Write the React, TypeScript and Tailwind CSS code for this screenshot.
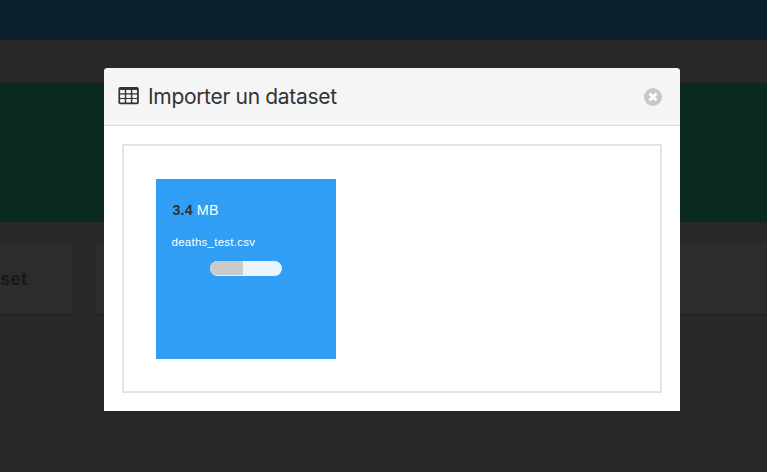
function TableIcon() {
  return (
    <svg className="mb-[2px] h-[18px] w-[21px] shrink-0" viewBox="0 0 21 18" aria-hidden="true">
      <rect x="0.4" y="0" width="20.4" height="17.2" rx="2" fill="#333333" />
      {[3, 7.6, 12.1].map((y) =>
        [2.1, 8.2, 14.3].map((x) => (
          <rect key={`${x}-${y}`} x={x} y={y} width="4.7" height="3.3" rx="0.4" fill="#f5f5f5" />
        )),
      )}
    </svg>
  );
}

function CloseIcon() {
  return (
    <svg className="block size-[18px]" viewBox="0 0 18 18" aria-hidden="true">
      <circle cx="9" cy="9" r="9" fill="#c8c8c8" />
      <path d="M5.5 5.5l7 7M12.5 5.5l-7 7" stroke="#ffffff" strokeWidth="2.7" />
    </svg>
  );
}

function FilePreview() {
  return (
    <div className="flex size-[180px] flex-col bg-[#2f9ef4] pt-[22px] text-white">
      <div className="pl-[16.5px] text-[14.4px] leading-[18px] tracking-[0.08px]">
        <strong className="font-bold text-[#333333]">3.4</strong> MB
      </div>
      <div className="mt-[15px] pl-[15.5px] text-[11.5px] leading-[16px] tracking-[0.26px]">deaths_test.csv</div>
      <div className="mt-[11px] ml-[54px] h-[15px] w-[72px] overflow-hidden rounded-[8px] bg-[#e9f4fe]">
        <div className="h-[14px] w-[33px] bg-[#cbcbcb]" />
      </div>
    </div>
  );
}

export default function App() {
  return (
    <div className="relative h-[472px] w-[767px] overflow-hidden bg-[#282828] font-['Liberation_Sans',Arial,sans-serif]">
      <div className="flex h-full flex-col">
        <div className="h-[40px] shrink-0 bg-[#0b1e2c]" />
        <div className="mt-[43px] h-[139px] shrink-0 bg-[#0a2921]" />
        <div className="mt-[22px] flex h-[70px] gap-[23px]">
          <div className="flex w-[72px] items-center rounded-r-[4px] bg-[#2c2c2c] shadow-[0_1px_1px_#222222]">
            <span className="text-[18px] font-bold tracking-[0.5px] text-[#181818]">set</span>
          </div>
          <div className="flex-1 rounded-l-[4px] bg-[#2c2c2c] shadow-[0_1px_1px_#222222]" />
        </div>
      </div>

      <div
        role="dialog"
        className="absolute top-[68px] left-[104px] flex h-[343px] w-[576px] flex-col overflow-hidden rounded-t-[4px] bg-white"
      >
        <header className="flex h-[58px] shrink-0 items-center border-b border-[#d9d9d9] bg-[#f5f5f5] pr-[18px] pl-[14px]">
          <TableIcon />
          <h1 className="ml-[9px] flex-1 font-[Inter,sans-serif] text-[21px] leading-[28px] tracking-[-0.32px] text-[#333333]">
            Importer un dataset
          </h1>
          <button type="button" aria-label="Fermer">
            <CloseIcon />
          </button>
        </header>
        <div className="flex-1 p-[18px]">
          <div className="h-[249px] border-2 border-[#e4e4e4] px-[32px] py-[33px]">
            <FilePreview />
          </div>
        </div>
      </div>
    </div>
  );
}
